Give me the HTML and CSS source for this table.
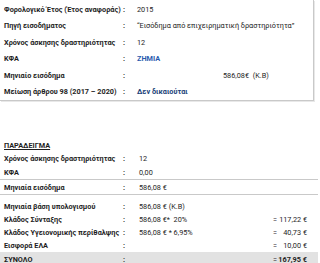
FILE: index.html
```html
<!DOCTYPE html>
<html lang="el">
<head>
<meta charset="utf-8">
<link rel="stylesheet" href="styles.css">
</head>
<body>
<div class="summary">
  <div class="row"><span class="lbl">Φορολογικό Έτος (Έτος αναφοράς)</span><span class="colon">:</span><span class="val">2015</span></div>
  <div class="row"><span class="lbl">Πηγή εισοδήματος</span><span class="colon">:</span><span class="val">“Εισόδημα από επιχειρηματική δραστηριότητα”</span></div>
  <div class="row"><span class="lbl">Χρόνος άσκησης δραστηριότητας</span><span class="colon">:</span><span class="val">12</span></div>
  <div class="row"><span class="lbl">ΚΦΑ</span><span class="colon">:</span><span class="val blue">ΖΗΜΙΑ</span></div>
  <div class="row"><span class="lbl">Μηνιαίο εισόδημα</span><span class="colon">:</span><span class="val indent">586,08€ &nbsp;(Κ.Β)</span></div>
  <div class="row"><span class="lbl">Μείωση άρθρου 98 (2017 – 2020)</span><span class="colon">:</span><span class="val navy">Δεν δικαιούται</span></div>
</div>

<div class="example">
  <div class="erow"><span class="title">ΠΑΡΑΔΕΙΓΜΑ</span></div>
  <div class="erow"><span class="lbl">Χρόνος άσκησης δραστηριότητας</span><span class="colon">:</span><span class="val">12</span><span class="res"></span></div>
  <div class="erow line"><span class="lbl">ΚΦΑ</span><span class="colon">:</span><span class="val">0,00</span><span class="res"></span></div>
  <div class="erow line"><span class="lbl">Μηνιαία εισόδημα</span><span class="colon">:</span><span class="val">586,08 €</span><span class="res"></span></div>
  <div class="erow first"><span class="lbl">Μηνιαία βάση υπολογισμού</span><span class="colon">:</span><span class="val">586,08 € (Κ.Β)</span><span class="res"></span></div>
  <div class="erow"><span class="lbl">Κλάδος Σύνταξης</span><span class="colon">:</span><span class="val">586,08 €* &nbsp;20%</span><span class="res"><span>=</span><span>117,22 €</span></span></div>
  <div class="erow"><span class="lbl">Κλάδος Υγειονομικής περίθαλψης</span><span class="colon">:</span><span class="val">586,08 € * 6,95%</span><span class="res"><span>=</span><span>40,73 €</span></span></div>
  <div class="erow"><span class="lbl">Εισφορά ΕΛΑ</span><span class="colon">:</span><span class="val"></span><span class="res"><span>=</span><span>10,00 €</span></span></div>
  <div class="erow total"><span class="lbl">ΣΥΝΟΛΟ</span><span class="colon">:</span><span class="val"></span><span class="res"><span>=</span><span class="b">167,95 €</span></span></div>
</div>
</body>
</html>
```

FILE: styles.css
```css
html, body {
  margin: 0;
  padding: 0;
  background: #ffffff;
}
body {
  font-family: Roboto, "Noto Sans", sans-serif;
  font-size: 7.3px;
  color: #1e1e1e;
  width: 320px;
  overflow: hidden;
}
.summary {
  width: 313px;
  padding-top: 1px;
  border-right: 1px solid #c9c9c9;
  border-bottom: 1px solid #c9c9c9;
  box-shadow: 1px 1px 0 #e8e8e8;
}
.row {
  display: grid;
  grid-template-columns: 119px 14px 1fr;
  height: 16.5px;
  align-items: center;
  padding-left: 4px;
}
.lbl {
  font-weight: 700;
  white-space: nowrap;
}
.colon {
  font-weight: 700;
}
.val {
  white-space: nowrap;
}
.blue {
  color: #2a5aae;
  font-weight: 700;
}
.navy {
  color: #203f78;
  font-weight: 700;
}
.indent {
  padding-left: 86px;
}
.example {
  margin-top: 38px;
  width: 318px;
}
.erow {
  display: grid;
  grid-template-columns: 119px 16px 134px 34px;
  height: 13px;
  align-items: center;
  padding-left: 4px;
}
.erow.line {
  border-bottom: 1px solid #c9c9c9;
  height: 14px;
}
.erow.first {
  margin-top: 5px;
}
.title {
  font-weight: 700;
  text-decoration: underline;
}
.res {
  display: flex;
  justify-content: space-between;
  white-space: nowrap;
}
.total {
  background: #e2e2e2;
  height: 14px;
}
.b {
  font-weight: 700;
}
```
